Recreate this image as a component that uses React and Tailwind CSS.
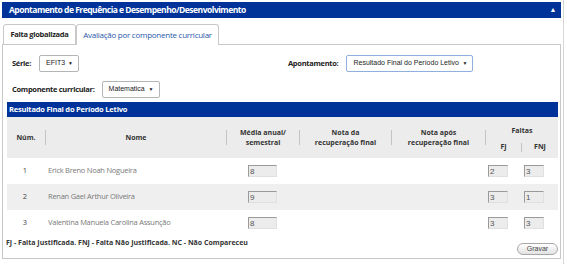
import React from "react";

const students = [
  { num: 1, name: "Erick Breno Noah Nogueira", media: "8", fj: "2", fnj: "3" },
  { num: 2, name: "Renan Gael Arthur Oliveira", media: "9", fj: "3", fnj: "1" },
  { num: 3, name: "Valentina Manuela Carolina Assunção", media: "8", fj: "3", fnj: "3" },
];

const Select = ({ value, width, focused }) => (
  <div
    className={`flex items-center justify-between h-[17px] ${width} bg-white border ${
      focused ? "border-[#8fb0dc]" : "border-[#b5b5b5]"
    } rounded-[2px] pl-[6px] pr-[5px] font-['Liberation_Sans',Arial,sans-serif] text-[7px] text-[#222] whitespace-nowrap`}
  >
    <span>{value}</span>
    <span className="text-[5px] text-[#222]">▼</span>
  </div>
);

const Cell = ({ value, w, ml }) => (
  <div
    className={`${w} ${ml} h-[12px] bg-[#ececec] border-t border-l border-t-[#9a9a9a] border-l-[#9a9a9a] border-r border-b border-r-[#e0e0e0] border-b-[#e0e0e0] pl-[1px] font-['Liberation_Sans',Arial,sans-serif] text-[8px] leading-[11px] text-[#555]`}
  >
    {value}
  </div>
);

const HeadCell = ({ children, divider = true }) => (
  <div className="flex items-center h-full">
    {divider && <div className="w-px h-[15px] bg-[#c4c4c4]" />}
    <div className="flex-1 text-center leading-[10px]">{children}</div>
  </div>
);

const cols = "grid grid-cols-[38px_181px_73px_92px_94px_36px_37px]";

export default function App() {
  return (
    <div className="w-[567px] h-[264px] bg-white overflow-hidden font-['Open_Sans',sans-serif]">
      <div className="w-[564px] h-full border-r border-[#d6d6d6] pl-[2px] pr-[2px] pt-[2px]">
        {/* Header */}
        <div className="flex items-center justify-between h-[16px] bg-[#003399] pl-[7px] pr-[5px] text-white text-[8.5px] tracking-[-0.5px] font-bold">
          <span>Apontamento de Frequência e Desempenho/Desenvolvimento</span>
          <span className="text-[7px]">▲</span>
        </div>

        {/* Tabs */}
        <div className="flex mt-[6px] pl-[1px] h-[21px] relative z-10">
          <div className="w-[73px] h-[21px] border border-[#c8c8c8] rounded-t-[3px] bg-white flex items-center justify-center text-[7.5px] tracking-[-0.3px] font-bold text-[#222]">
            Falta globalizada
          </div>
          <div className="w-[143px] h-[21px] border border-b-0 border-[#c8c8c8] rounded-t-[3px] bg-white flex items-center justify-center text-[8px] tracking-[-0.25px] text-[#2a58a8]">
            Avaliação por componente curricular
          </div>
        </div>

        {/* Panel */}
        <div className="-mt-px w-[559px] h-[215px] border border-[#c8c8c8] pt-[10px]">
          <div className="grid grid-cols-2 pl-[9px]">
            <div className="flex items-center gap-[8px]">
              <span className="text-[7.5px] tracking-[-0.3px] font-bold text-[#222]">Série:</span>
              <Select value="EFIT3" width="w-[40px]" />
            </div>
            <div className="flex items-center gap-[8px] pl-[2px]">
              <span className="text-[7.5px] tracking-[-0.3px] font-bold text-[#222]">Apontamento:</span>
              <Select value="Resultado Final do Período Letivo" width="w-[127px]" focused />
            </div>
          </div>
          <div className="flex items-center gap-[7px] pl-[9px] mt-[9px]">
            <span className="text-[7.5px] tracking-[-0.3px] font-bold text-[#222]">Componente curricular:</span>
            <Select value="Matematica" width="w-[58px]" />
          </div>

          {/* Table */}
          <div className="ml-[4px] mt-[4px] w-[551px]">
            <div className="h-[15px] bg-[#003399] flex items-center pl-[2px] text-white text-[7.5px] tracking-[-0.2px] font-bold">
              Resultado Final do Período Letivo
            </div>
            <div className={`${cols} h-[41px] bg-[#ececec] text-[7px] font-bold text-[#333]`}>
              <HeadCell divider={false}>Núm.</HeadCell>
              <HeadCell>Nome</HeadCell>
              <HeadCell>
                Média anual/
                <br />
                semestral
              </HeadCell>
              <HeadCell>
                Nota da
                <br />
                recuperação final
              </HeadCell>
              <HeadCell>
                Nota após
                <br />
                recuperação final
              </HeadCell>
              <div className="col-span-2 flex items-center h-full">
                <div className="w-px h-[15px] bg-[#c4c4c4]" />
                <div className="flex-1 flex flex-col h-full">
                  <div className="h-[20px] flex items-end justify-center pb-[1px]">Faltas</div>
                  <div className="flex-1 grid grid-cols-[35px_37px]">
                    <div className="flex items-center justify-center">FJ</div>
                    <div className="flex items-center">
                      <div className="w-px h-[9px] bg-[#c4c4c4]" />
                      <div className="flex-1 text-center">FNJ</div>
                    </div>
                  </div>
                </div>
              </div>
            </div>
            {students.map((s, i) => (
              <div
                key={s.num}
                className={`${cols} h-[26px] items-center text-[7.5px] ${i % 2 === 1 ? "bg-[#efefef]" : "bg-white"}`}
              >
                <div className="text-center text-[#444] pr-[2px]">{s.num}</div>
                <div className="pl-[3px] text-[#7a7a7a] tracking-[-0.25px]">{s.name}</div>
                <div>
                  <Cell value={s.media} w="w-[29px]" ml="ml-[22px]" />
                </div>
                <div />
                <div />
                <div>
                  <Cell value={s.fj} w="w-[20px]" ml="ml-[3px]" />
                </div>
                <div>
                  <Cell value={s.fnj} w="w-[20px]" ml="ml-[3px]" />
                </div>
              </div>
            ))}
          </div>

          {/* Footer */}
          <div className="flex justify-between items-start pl-[3px] pr-[2px] mt-[2px]">
            <span className="text-[7px] font-bold text-[#333] leading-[10px]">
              FJ - Falta Justificada. FNJ - Falta Não Justificada. NC - Não Compareceu
            </span>
            <button className="mt-[5px] w-[41px] h-[12px] rounded-full border border-[#a8a8a8] bg-gradient-to-b from-white to-[#e2e2e2] font-['Liberation_Sans',Arial,sans-serif] text-[7px] leading-[10px] text-[#444]">
              Gravar
            </button>
          </div>
        </div>
      </div>
    </div>
  );
}
